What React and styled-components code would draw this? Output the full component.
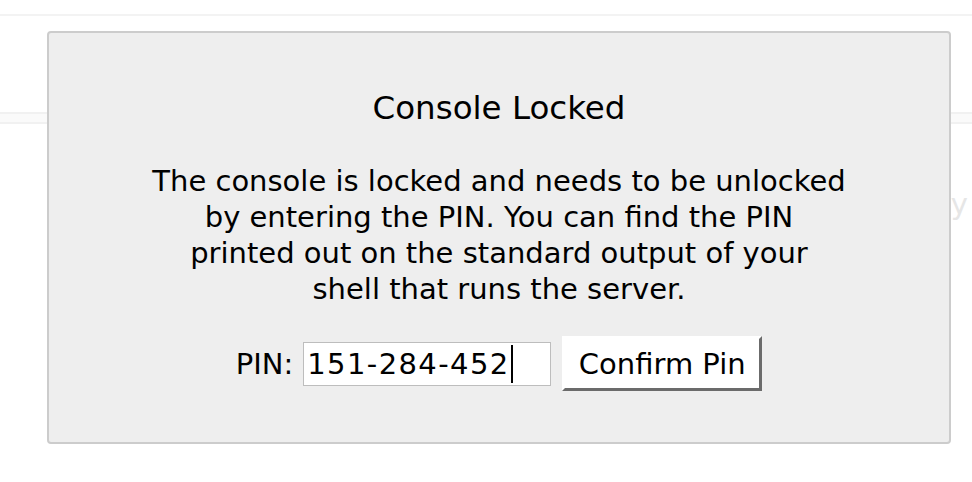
import React from "react";
import styled, { createGlobalStyle } from "styled-components";

const Global = createGlobalStyle`
  html, body { margin: 0; padding: 0; background: #fff; }
  body { font-family: "DejaVu Sans", "Verdana", sans-serif; color: #000; }
  * { box-sizing: border-box; }
`;

const Page = styled.div`
  position: relative;
  width: 972px;
  height: 482px;
  overflow: hidden;
  background: #fff;
`;

const TopRule = styled.div`
  margin-top: 14px;
  height: 2px;
  background: #f3f3f3;
`;

const Band = styled.div`
  margin-top: 96px;
  height: 12px;
  background: #fafafa;
  border-top: 2px solid #f1f1f1;
  border-bottom: 2px solid #f1f1f1;
`;

const FaintRow = styled.div`
  display: flex;
  justify-content: flex-end;
  padding-right: 4px;
  margin-top: 62px;
  font-size: 29px;
  line-height: 36px;
  color: #e6e6e6;
`;

const Overlay = styled.div`
  position: absolute;
  inset: 0;
`;

const Dialog = styled.div`
  margin: 31px 0 0 47px;
  width: 904px;
  padding: 20px 100px;
  background: #eee;
  border: 2px solid #ccc;
  border-radius: 4px;
  text-align: center;
`;

const Title = styled.h1`
  margin: 35px 0 0;
  font-size: 32.5px;
  line-height: 40px;
  font-weight: normal;
`;

const Message = styled.p`
  margin: 35px 0 0;
  font-size: 29px;
  line-height: 36px;
`;

const Form = styled.form`
  margin: 29px 0 31px;
  height: 55px;
  display: flex;
  align-items: center;
  justify-content: center;
  font-size: 29px;
`;

const Label = styled.label`
  margin-right: 10px;
  font-size: 29px;
  line-height: 36px;
`;

const InputWrap = styled.span`
  position: relative;
  display: inline-flex;
  margin-right: 11px;
`;

const PinInput = styled.input`
  width: 248px;
  height: 44px;
  padding: 0 3px;
  border: 1px solid #bdbdbd;
  background: #fff;
  font-family: "DejaVu Sans", "Verdana", sans-serif;
  font-size: 29px;
  letter-spacing: 1.4px;
  color: #000;
  caret-color: transparent;
  outline: none;
  border-radius: 0;
`;

const Caret = styled.span`
  position: absolute;
  left: 208px;
  top: 3px;
  width: 2px;
  height: 38px;
  background: #000;
  pointer-events: none;
`;

const ConfirmButton = styled.button`
  width: 200px;
  height: 55px;
  padding: 0;
  background: #fff;
  border: 3px solid;
  border-color: #fff #6b6b6b #6b6b6b #fff;
  font-family: "DejaVu Sans", "Verdana", sans-serif;
  font-size: 29px;
  color: #000;
  cursor: pointer;
`;

export default function App() {
  return (
    <>
      <Global />
      <Page>
        <TopRule />
        <Band />
        <FaintRow>y</FaintRow>
        <Overlay>
          <Dialog>
            <Title>Console Locked</Title>
            <Message>
              The console is locked and needs to be unlocked
              <br />
              by entering the PIN. You can find the PIN
              <br />
              printed out on the standard output of your
              <br />
              shell that runs the server.
            </Message>
            <Form onSubmit={(e) => e.preventDefault()}>
              <Label htmlFor="pin">PIN:</Label>
              <InputWrap>
                <PinInput id="pin" type="text" defaultValue="151-284-452" />
                <Caret />
              </InputWrap>
              <ConfirmButton type="submit">Confirm Pin</ConfirmButton>
            </Form>
          </Dialog>
        </Overlay>
      </Page>
    </>
  );
}
